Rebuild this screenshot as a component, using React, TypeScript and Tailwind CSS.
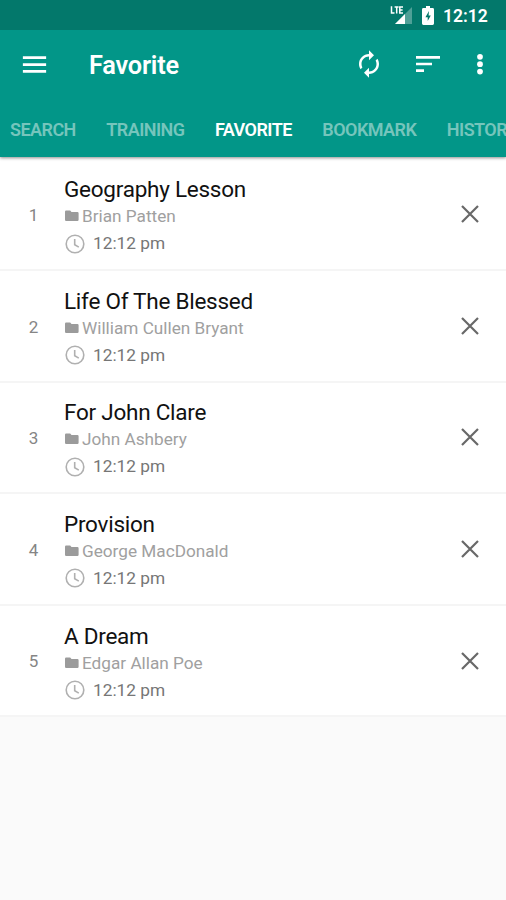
import React from 'react';

type Poem = { title: string; author: string; time: string };

const poems: Poem[] = [
    { title: 'Geography Lesson', author: 'Brian Patten', time: '12:12 pm' },
    { title: 'Life Of The Blessed', author: 'William Cullen Bryant', time: '12:12 pm' },
    { title: 'For John Clare', author: 'John Ashbery', time: '12:12 pm' },
    { title: 'Provision', author: 'George MacDonald', time: '12:12 pm' },
    { title: 'A Dream', author: 'Edgar Allan Poe', time: '12:12 pm' },
];

const tabs = ['SEARCH', 'TRAINING', 'FAVORITE', 'BOOKMARK', 'HISTORY'];

const StatusBar = () => (
    <div className="h-[30px] shrink-0 bg-[#03786b] flex items-center pl-[390px] text-white">
        <svg width="23" height="20" viewBox="0 0 23 20" className="shrink-0">
            <path d="M22 2v17H5z" fill="#fff" fillOpacity="0.3" />
            <path d="M15 9v10H5z" fill="#fff" />
            <path d="M1.5 1.2V8h3M4.6 1.9h4M6.7 1.9v6.6M13 1.9H9.8V8H13M9.8 5h2.8" fill="none" stroke="#fff" strokeWidth="1.5" />
        </svg>
        <svg width="12" height="19" viewBox="0 0 12 19" className="shrink-0 ml-[9px]">
            <path d="M4 0h4v2h2.6A1.4 1.4 0 0 1 12 3.4v14.2a1.4 1.4 0 0 1-1.4 1.4H1.4A1.4 1.4 0 0 1 0 17.6V3.4A1.4 1.4 0 0 1 1.4 2H4z" fill="#fff" />
            <path d="M7 5L3.4 11.2h2.3V15L8.8 9.4H6.6z" fill="#03786b" />
        </svg>
        <span className="ml-[9px] text-[17.5px] leading-[30px] font-semibold pt-[2px] whitespace-nowrap">12:12</span>
    </div>
);

const AppBar = () => (
    <div className="h-[70px] shrink-0 flex items-center text-white pl-[19px] pr-[11px]">
        <svg width="31" height="33" viewBox="0 0 24 24" preserveAspectRatio="none" fill="currentColor" className="-mt-[2px]">
            <path d="M3 18h18v-2H3v2zm0-5h18v-2H3v2zm0-7v2h18V6H3z" />
        </svg>
        <h1 className="ml-[39px] mt-[2px] text-[25.3px] font-semibold leading-8 tracking-[-0.2px]">Favorite</h1>
        <div className="ml-auto -mt-[2px] flex items-center">
            <svg width="30" height="30" viewBox="0 0 24 24" fill="currentColor">
                <path d="M12 6v3l4-4-4-4v3c-4.42 0-8 3.58-8 8 0 1.57.46 3.03 1.24 4.26L6.7 14.8c-.45-.83-.7-1.79-.7-2.8 0-3.31 2.69-6 6-6zm6.76 1.74L17.3 9.2c.44.84.7 1.79.7 2.8 0 3.31-2.69 6-6 6v-3l-4 4 4 4v-3c4.42 0 8-3.58 8-8 0-1.57-.46-3.03-1.24-4.26z" />
            </svg>
            <svg width="32" height="32" viewBox="0 0 24 24" fill="currentColor" className="ml-7">
                <path d="M3 18h6v-2H3v2zM3 6v2h18V6H3zm0 7h12v-2H3v2z" />
            </svg>
            <svg width="30" height="30" viewBox="0 0 24 24" fill="currentColor" className="ml-[21px]">
                <circle cx="12" cy="6.2" r="2.3" />
                <circle cx="12" cy="12.1" r="2.3" />
                <circle cx="12" cy="18" r="2.3" />
            </svg>
        </div>
    </div>
);

const TabBar = () => (
    <div className="h-[57px] shrink-0 flex items-center gap-[30.5px] pl-[10px] overflow-hidden whitespace-nowrap">
        {tabs.map((tab) => (
            <button key={tab} className={`shrink-0 text-[18px] font-semibold tracking-[-0.55px] pt-[2px] ${tab === 'FAVORITE' ? 'text-white' : 'text-[#76c5bc]'}`}>
                {tab}
            </button>
        ))}
    </div>
);

const PoemRow = ({ poem, index }: { poem: Poem; index: number }) => (
    <li className="h-[111.6px] shrink-0 flex items-center bg-white border-b-2 border-[#f5f5f5]">
        <span className="w-[67px] text-center text-[17px] text-[#858585] mt-[3px]">{index}</span>
        <div className="-ml-[3px] flex-1 pt-[6px]">
            <h2 className="text-[22.5px] leading-[27px] tracking-[-0.25px] text-[#111]">{poem.title}</h2>
            <div className="flex items-center text-[17.2px] leading-[26px] text-[#a0a0a0]">
                <svg width="14" height="12" viewBox="0 0 14 12" fill="#9b9b9b" className="ml-[1px] mr-[3px]">
                    <path d="M1.3.5h3.9L6.5 2h5.9a1.2 1.2 0 0 1 1.2 1.2v6.6a1.2 1.2 0 0 1-1.2 1.2H1.3A1.2 1.2 0 0 1 0 9.8V1.7A1.2 1.2 0 0 1 1.3.5z" />
                </svg>
                {poem.author}
            </div>
            <div className="flex items-center text-[17.3px] leading-[29px] text-[#767676]">
                <svg width="20" height="20" viewBox="0 0 20 20" fill="none" stroke="#b0b0b0" strokeWidth="1.6" className="ml-[1px] mr-[8px]">
                    <circle cx="10" cy="10" r="8.8" />
                    <path d="M9.7 5v5.7l4.1 2.4" />
                </svg>
                {poem.time}
            </div>
        </div>
        <button aria-label="Remove" className="mr-[27px]">
            <svg width="18" height="18" viewBox="0 0 18 18" stroke="#686868" strokeWidth="2.2">
                <path d="M1 1l16 16M17 1L1 17" />
            </svg>
        </button>
    </li>
);

const App = () => {
    return (
        <div className="w-full h-[900px] bg-[#fafafa] flex flex-col overflow-hidden font-['Roboto',sans-serif]">
            <header className="relative z-[1] flex flex-col bg-[#029688] shadow-[0_1px_3px_rgba(0,0,0,0.45)]">
                <StatusBar />
                <AppBar />
                <TabBar />
            </header>
            <ul className="flex flex-col pt-[2.4px] bg-white">
                {poems.map((poem, i) => (
                    <PoemRow key={poem.title} poem={poem} index={i + 1} />
                ))}
            </ul>
        </div>
    );
};

export default App;
